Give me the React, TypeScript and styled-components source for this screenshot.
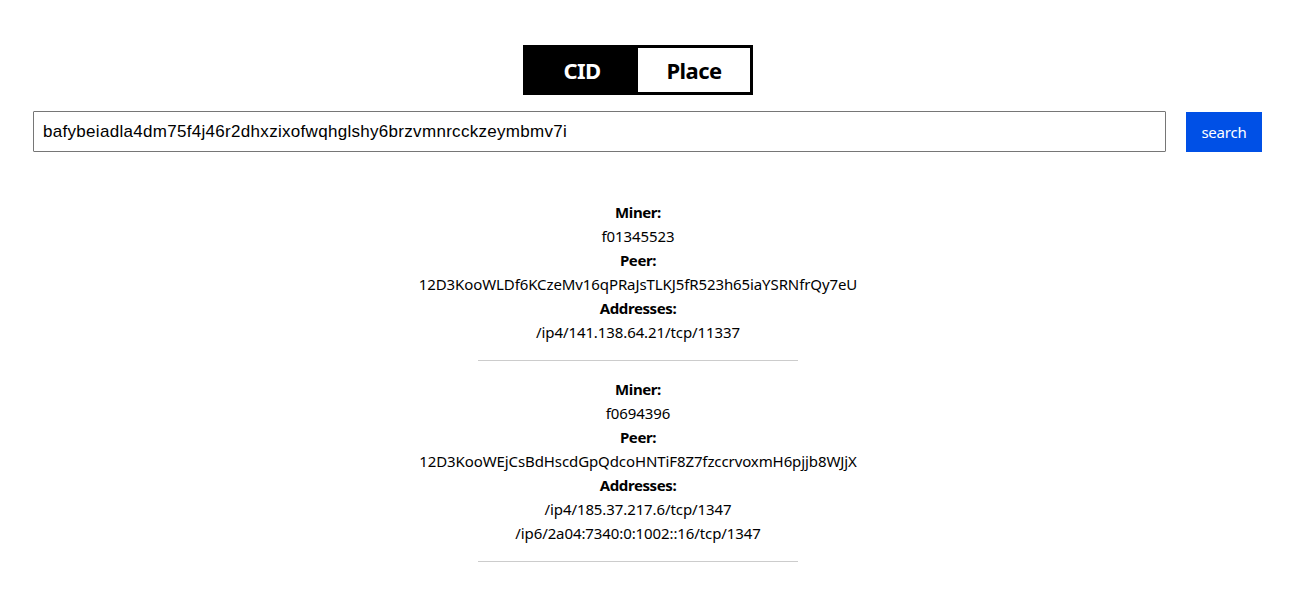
import React, { useState } from "react";
import styled, { createGlobalStyle } from "styled-components";

const GlobalStyle = createGlobalStyle`
  html, body {
    margin: 0;
    padding: 0;
    background: #ffffff;
  }
  body {
    font-family: "Noto Sans", "Open Sans", sans-serif;
    color: #000000;
  }
`;

const Page = styled.main`
  width: 1294px;
  padding-top: 45px;
  box-sizing: border-box;
`;

const Centered = styled.div`
  width: 1276px;
  display: flex;
  flex-direction: column;
  align-items: center;
`;

const Toggle = styled.div`
  display: flex;
  border: 3px solid #000;
  height: 50px;
  box-sizing: border-box;
`;

const ToggleButton = styled.button<{ $active: boolean }>`
  width: 112px;
  border: none;
  margin: 0;
  padding: 0;
  font-family: "Noto Sans", sans-serif;
  font-size: 22px;
  font-weight: 700;
  letter-spacing: -0.6px;
  cursor: pointer;
  background: ${({ $active }) => ($active ? "#000" : "#fff")};
  color: ${({ $active }) => ($active ? "#fff" : "#000")};
`;

const SearchRow = styled.form`
  display: flex;
  align-items: center;
  gap: 20px;
  padding: 0 32px 0 33px;
  margin-top: 16px;
`;

const SearchInput = styled.input`
  flex: 1;
  height: 41px;
  box-sizing: border-box;
  border: 1px solid #767676;
  border-radius: 1px;
  padding: 0 9px;
  font-family: "Liberation Sans", Arial, sans-serif;
  font-size: 17px;
  letter-spacing: 0.3px;
  color: #000;
  outline: none;
`;

const SearchButton = styled.button`
  width: 76px;
  height: 40px;
  border: none;
  background: #0050e6;
  color: #fff;
  font-family: "Noto Sans", sans-serif;
  font-size: 15px;
  letter-spacing: -0.2px;
  cursor: pointer;
`;

const Results = styled.section`
  margin-top: 48px;
  display: flex;
  flex-direction: column;
  align-items: center;
`;

const Provider = styled.div`
  display: flex;
  flex-direction: column;
  align-items: center;
  font-size: 15px;
  line-height: 24px;
`;

const Label = styled.div`
  font-weight: 700;
  letter-spacing: -0.4px;
`;

const Value = styled.div`
  letter-spacing: -0.1px;
`;

const Divider = styled.hr`
  width: 320px;
  border: none;
  border-top: 1px solid #cccccc;
  margin: 16px 0 16px;
`;

type Record = {
  miner: string;
  peer: string;
  addresses: string[];
};

const records: Record[] = [
  {
    miner: "f01345523",
    peer: "12D3KooWLDf6KCzeMv16qPRaJsTLKJ5fR523h65iaYSRNfrQy7eU",
    addresses: ["/ip4/141.138.64.21/tcp/11337"],
  },
  {
    miner: "f0694396",
    peer: "12D3KooWEjCsBdHscdGpQdcoHNTiF8Z7fzccrvoxmH6pjjb8WJjX",
    addresses: ["/ip4/185.37.217.6/tcp/1347", "/ip6/2a04:7340:0:1002::16/tcp/1347"],
  },
];

export default function App() {
  const [mode, setMode] = useState<"cid" | "place">("cid");
  const [query, setQuery] = useState("bafybeiadla4dm75f4j46r2dhxzixofwqhglshy6brzvmnrcckzeymbmv7i");

  return (
    <>
      <GlobalStyle />
      <Page>
        <Centered>
          <Toggle>
            <ToggleButton $active={mode === "cid"} onClick={() => setMode("cid")}>
              CID
            </ToggleButton>
            <ToggleButton $active={mode === "place"} onClick={() => setMode("place")}>
              Place
            </ToggleButton>
          </Toggle>
        </Centered>
        <SearchRow onSubmit={(e) => e.preventDefault()}>
          <SearchInput value={query} onChange={(e) => setQuery(e.target.value)} />
          <SearchButton type="submit">search</SearchButton>
        </SearchRow>
        <Centered>
          <Results>
            {records.map((r) => (
              <React.Fragment key={r.miner}>
                <Provider>
                  <Label>Miner:</Label>
                  <Value>{r.miner}</Value>
                  <Label>Peer:</Label>
                  <Value>{r.peer}</Value>
                  <Label>Addresses:</Label>
                  {r.addresses.map((a) => (
                    <Value key={a}>{a}</Value>
                  ))}
                </Provider>
                <Divider />
              </React.Fragment>
            ))}
          </Results>
        </Centered>
      </Page>
    </>
  );
}
